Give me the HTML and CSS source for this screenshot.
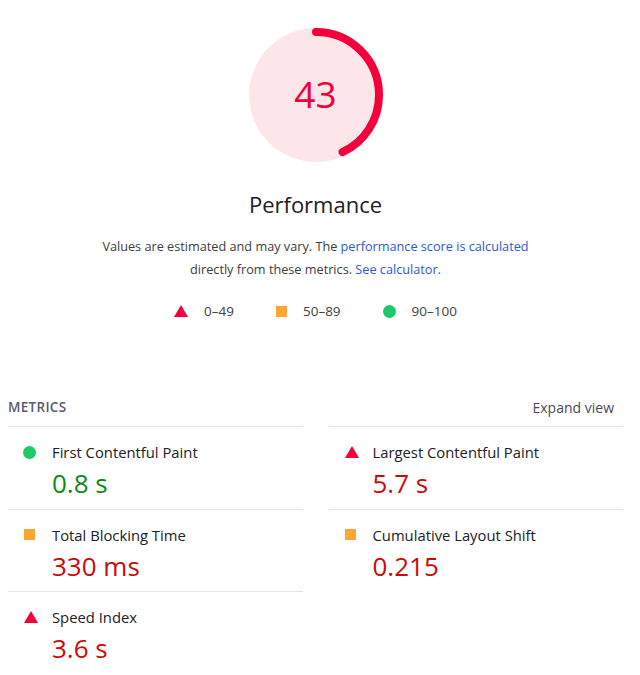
FILE: index.html
```html
<!DOCTYPE html>
<html>
<head>
<meta charset="utf-8">
<link rel="stylesheet" href="styles.css">
</head>
<body>
<div class="report">
  <div class="score">
    <div class="gauge">
      <svg width="140" height="140" viewBox="0 0 140 140">
        <circle cx="70" cy="70" r="67" class="gauge-base"/>
        <circle cx="70" cy="70" r="63" class="gauge-arc" stroke-dasharray="170.2 400" transform="rotate(-90 70 70)"/>
      </svg>
      <div class="gauge-value">43</div>
    </div>
    <div class="gauge-title">Performance</div>
    <p class="desc">Values are estimated and may vary. The <a href="#">performance score is calculated</a><br>directly from these metrics. <a href="#">See calculator.</a></p>
    <div class="legend">
      <span class="legend-item"><span class="icon tri"></span>0–49</span>
      <span class="legend-item"><span class="icon sq"></span>50–89</span>
      <span class="legend-item"><span class="icon dot"></span>90–100</span>
    </div>
  </div>

  <div class="metrics-head">
    <span class="metrics-label">METRICS</span>
    <span class="expand">Expand view</span>
  </div>
  <div class="metrics">
    <div class="metric">
      <div class="metric-title"><span class="icon dot"></span>First Contentful Paint</div>
      <div class="metric-value pass">0.8 s</div>
    </div>
    <div class="metric">
      <div class="metric-title"><span class="icon tri"></span>Largest Contentful Paint</div>
      <div class="metric-value fail">5.7 s</div>
    </div>
    <div class="metric">
      <div class="metric-title"><span class="icon sq"></span>Total Blocking Time</div>
      <div class="metric-value fail">330 ms</div>
    </div>
    <div class="metric">
      <div class="metric-title"><span class="icon sq"></span>Cumulative Layout Shift</div>
      <div class="metric-value fail">0.215</div>
    </div>
    <div class="metric last">
      <div class="metric-title"><span class="icon tri"></span>Speed Index</div>
      <div class="metric-value fail">3.6 s</div>
    </div>
  </div>
</div>
</body>
</html>
```

FILE: styles.css
```css
html, body {
  margin: 0;
  padding: 0;
  background: #fff;
}
body {
  font-family: "Open Sans", "Noto Sans", sans-serif;
  color: #212121;
}
.report {
  width: 615px;
  margin-left: 8px;
}
.score {
  display: flex;
  flex-direction: column;
  align-items: center;
  padding-top: 25px;
}
.gauge {
  position: relative;
  width: 140px;
  height: 140px;
}
.gauge svg {
  display: block;
}
.gauge-base {
  fill: #fde6ea;
}
.gauge-arc {
  fill: none;
  stroke: #f5003b;
  stroke-width: 8;
  stroke-linecap: round;
}
.gauge-value {
  position: absolute;
  inset: 0;
  display: flex;
  align-items: center;
  justify-content: center;
  font-size: 37px;
  color: #f0003a;
  padding-bottom: 4px;
}
.gauge-title {
  margin-top: 24px;
  font-size: 22px;
  line-height: 30px;
  color: #212121;
}
.desc {
  margin: 16px 0 0;
  text-align: center;
  font-size: 12.7px;
  line-height: 23px;
  color: #3c3c3c;
}
.desc a {
  color: #2e56d8;
  text-decoration: none;
}
.legend {
  display: flex;
  gap: 42px;
  margin-top: 22px;
  font-size: 13.5px;
  color: #424242;
  line-height: 16px;
}
.legend-item {
  display: flex;
  align-items: center;
  gap: 16px;
}
.icon {
  display: inline-block;
  flex: none;
}
.icon.tri {
  width: 0;
  height: 0;
  border-left: 7px solid transparent;
  border-right: 7px solid transparent;
  border-bottom: 12px solid #f5003b;
}
.icon.sq {
  width: 11px;
  height: 11px;
  background: #ffa534;
}
.icon.dot {
  width: 13px;
  height: 13px;
  border-radius: 50%;
  background: #1ccb67;
}
.metrics-head {
  display: flex;
  justify-content: space-between;
  align-items: center;
  margin-top: 78px;
  padding: 0 9px 0 0;
  height: 20px;
}
.metrics-label {
  font-size: 13.5px;
  font-weight: 600;
  color: #5a5a6a;
  letter-spacing: 0.3px;
}
.expand {
  font-size: 14px;
  color: #4a4a55;
}
.metrics {
  display: grid;
  grid-template-columns: 1fr 1fr;
  column-gap: 26px;
  margin-top: 9px;
}
.metric {
  border-top: 1px solid #e4e4e4;
  height: 82.5px;
  box-sizing: border-box;
  padding: 15px 0 0 44px;
}
.metric-title {
  position: relative;
  font-size: 14.8px;
  line-height: 20px;
  color: #202124;
}
.metric-title .icon {
  position: absolute;
  left: -28px;
  top: 4px;
}
.metric-title .icon.dot {
  left: -29px;
  top: 4px;
}
.metric-value {
  font-size: 26px;
  line-height: 32px;
  margin-top: 5px;
}
.metric-value.pass {
  color: #0a8a17;
}
.metric-value.fail {
  color: #cc0a0a;
}
```
